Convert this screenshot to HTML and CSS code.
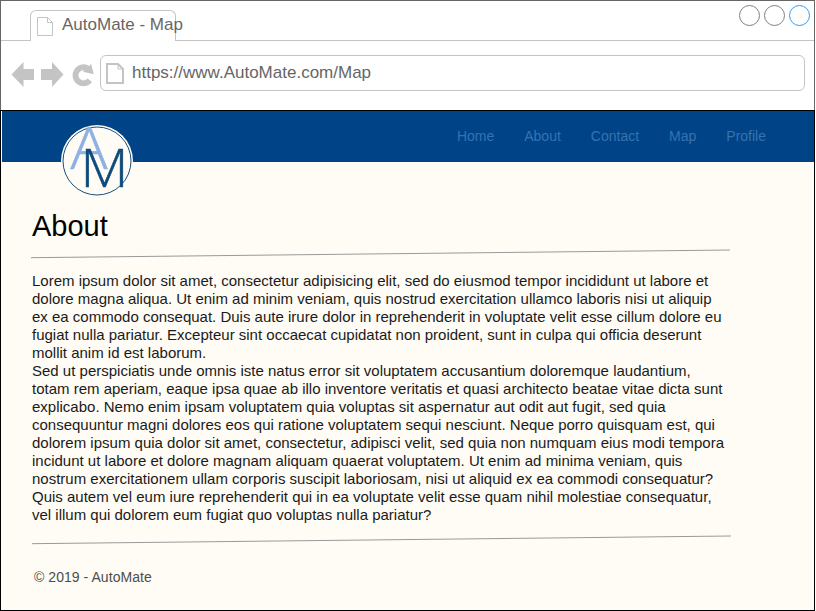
FILE: index.html
```html
<!DOCTYPE html>
<html lang="en">
<head>
<meta charset="utf-8">
<title>AutoMate - Map</title>
<link rel="stylesheet" href="styles.css">
</head>
<body>
<div class="window">
  <div class="tabs">
    <div class="tab">
      <svg class="tab-icon" width="16" height="19" viewBox="0 0 16 19"><path d="M.5.5h10l5 5v13H.5zM10.500.5v5h5" fill="none" stroke="#c4c4c4"/></svg>
      <span>AutoMate - Map</span>
    </div>
    <div class="controls"><i></i><i></i><i class="active"></i></div>
  </div>
  <div class="toolbar">
    <svg class="arrow" width="23" height="25" viewBox="0 0 23 25"><path d="M.5 12.500 12.500 0v7h10.500v11H12.500v7z" fill="#c4c4c4"/></svg>
    <svg class="arrow forward" width="23" height="25" viewBox="0 0 23 25"><path d="M22.500 12.500 11 0v7H0v11h11v7z" fill="#c4c4c4"/></svg>
    <svg class="reload" width="22" height="24" viewBox="0 0 22 24"><path d="M17.800 17.200A8 8 0 1 1 16.200 5.800" fill="none" stroke="#c4c4c4" stroke-width="5.800"/><path d="M19.200 1 21.800 11.200 10.800 8.800z" fill="#c4c4c4"/></svg>
    <div class="address">
      <svg width="18" height="21" viewBox="0 0 18 21"><path d="M1 1h11l5 5v14H1z" fill="none" stroke="#c4c4c4" stroke-width="2"/><path d="M12 1v5h5" fill="none" stroke="#c4c4c4"/></svg>
      <span>https://www.AutoMate.com/Map</span>
    </div>
  </div>
  <div class="page">
    <header class="header">
      <svg class="logo" width="72" height="72" viewBox="0 0 72 72">
        <circle cx="36" cy="36" r="36" fill="#fffcf5"/>
        <circle cx="36" cy="36" r="34" fill="none" stroke="#16507f"/>
        <text class="logo-a" x="9.500" y="44" textLength="37" lengthAdjust="spacingAndGlyphs">A</text>
        <text class="logo-m" x="19.500" y="61.500" textLength="48" lengthAdjust="spacingAndGlyphs">M</text>
      </svg>
      <nav class="nav"><a>Home</a><a>About</a><a>Contact</a><a>Map</a><a>Profile</a></nav>
    </header>
    <main class="content">
      <h1>About</h1>
      <svg class="rule" width="700" height="10" viewBox="0 0 700 10"><path d="M0 8.700 699 1" stroke="#999"/></svg>
      <p>Lorem ipsum dolor sit amet, consectetur adipisicing elit, sed do eiusmod tempor incididunt ut labore et<br>dolore magna aliqua. Ut enim ad minim veniam, quis nostrud exercitation ullamco laboris nisi ut aliquip<br>ex ea commodo consequat. Duis aute irure dolor in reprehenderit in voluptate velit esse cillum dolore eu<br>fugiat nulla pariatur. Excepteur sint occaecat cupidatat non proident, sunt in culpa qui officia deserunt<br>mollit anim id est laborum.</p>
      <p>Sed ut perspiciatis unde omnis iste natus error sit voluptatem accusantium doloremque laudantium,<br>totam rem aperiam, eaque ipsa quae ab illo inventore veritatis et quasi architecto beatae vitae dicta sunt<br>explicabo. Nemo enim ipsam voluptatem quia voluptas sit aspernatur aut odit aut fugit, sed quia<br>consequuntur magni dolores eos qui ratione voluptatem sequi nesciunt. Neque porro quisquam est, qui<br>dolorem ipsum quia dolor sit amet, consectetur, adipisci velit, sed quia non numquam eius modi tempora<br>incidunt ut labore et dolore magnam aliquam quaerat voluptatem. Ut enim ad minima veniam, quis<br>nostrum exercitationem ullam corporis suscipit laboriosam, nisi ut aliquid ex ea commodi consequatur?<br>Quis autem vel eum iure reprehenderit qui in ea voluptate velit esse quam nihil molestiae consequatur,<br>vel illum qui dolorem eum fugiat quo voluptas nulla pariatur?</p>
      <svg class="rule bottom" width="700" height="10" viewBox="0 0 700 10"><path d="M0 8.700 699 1" stroke="#999"/></svg>
    </main>
    <footer class="footer">© 2019 - AutoMate</footer>
  </div>
</div>
</body>
</html>
```
FILE: styles.css
```css
* { box-sizing: border-box; }
body { margin: 0; background: #fff; font-family: "Liberation Sans", Arial, sans-serif; overflow: hidden; }
svg { display: block; flex: none; }
.window { width: 815px; height: 611px; border: 1px solid #666; border-bottom: 0; display: flex; flex-direction: column; }
.tabs { height: 40px; border-bottom: 1px solid #c4c4c4; display: flex; justify-content: space-between; align-items: flex-start; flex: none; }
.tab { width: 146px; height: 31px; margin: 9px 0 0 29px; border: 1px solid #c4c4c4; border-bottom: 0; border-radius: 6px 6px 0 0; background: #fff; display: flex; padding-left: 6px; color: #666; font-size: 17px; line-height: 20px; white-space: nowrap; }
.tab-icon { margin-top: 6px; }
.tab span { margin: 4px 0 0 9px; }
.controls { display: flex; gap: 4px; margin: 4px 4px 0 0; }
.controls i { width: 21px; height: 21px; border: 1px solid #808080; border-radius: 50%; }
.controls .active { border-color: #3399ff; }
.toolbar { height: 69px; flex: none; display: flex; align-items: flex-start; padding: 14px 9px 0 10px; }
.arrow { margin-top: 7px; }
.forward { margin-left: 7px; }
.reload { margin: 8px 0 0 8px; }
.address { flex: 1; margin-left: 6px; height: 36px; border: 1px solid #c4c4c4; border-radius: 6px; display: flex; align-items: center; padding-left: 5px; color: #666; font-size: 17px; }
.address span { margin-left: 8px; line-height: 20px; }
.page { flex: 1; margin: 0 -1px; border: 1px solid #000; background: #fffcf5; display: flex; flex-direction: column; }
.header { height: 51px; margin-left: 1px; background: #004387; flex: none; display: flex; justify-content: space-between; align-items: flex-start; padding: 14px 48px 0 59px; }
.nav { display: flex; gap: 30px; margin-top: 3px; font-size: 14px; line-height: 16px; color: #3573b1; }
.logo-a, .logo-m { font-family: "Open Sans", sans-serif; font-weight: 300; font-size: 58px; }
.logo-a { fill: #8fb0e3; stroke: #8fb0e3; stroke-width: .6px; }
.logo-m { fill: #0d4a7d; stroke: #0d4a7d; stroke-width: .5px; font-size: 53px; }
.content { padding: 46px 0 0 31px; color: #1a1a1a; }
h1 { margin: 0; font-size: 29px; line-height: 36px; font-weight: 400; color: #000; }
.rule { margin: 5px 0 13px -1px; }
p { margin: 0; font-size: 15px; line-height: 18px; white-space: nowrap; }
.bottom { margin: 11px 0 0 0; }
.footer { padding: 24px 0 0 33px; font-size: 14px; line-height: 16px; color: #4d4d4d; letter-spacing: .05px; }
```
